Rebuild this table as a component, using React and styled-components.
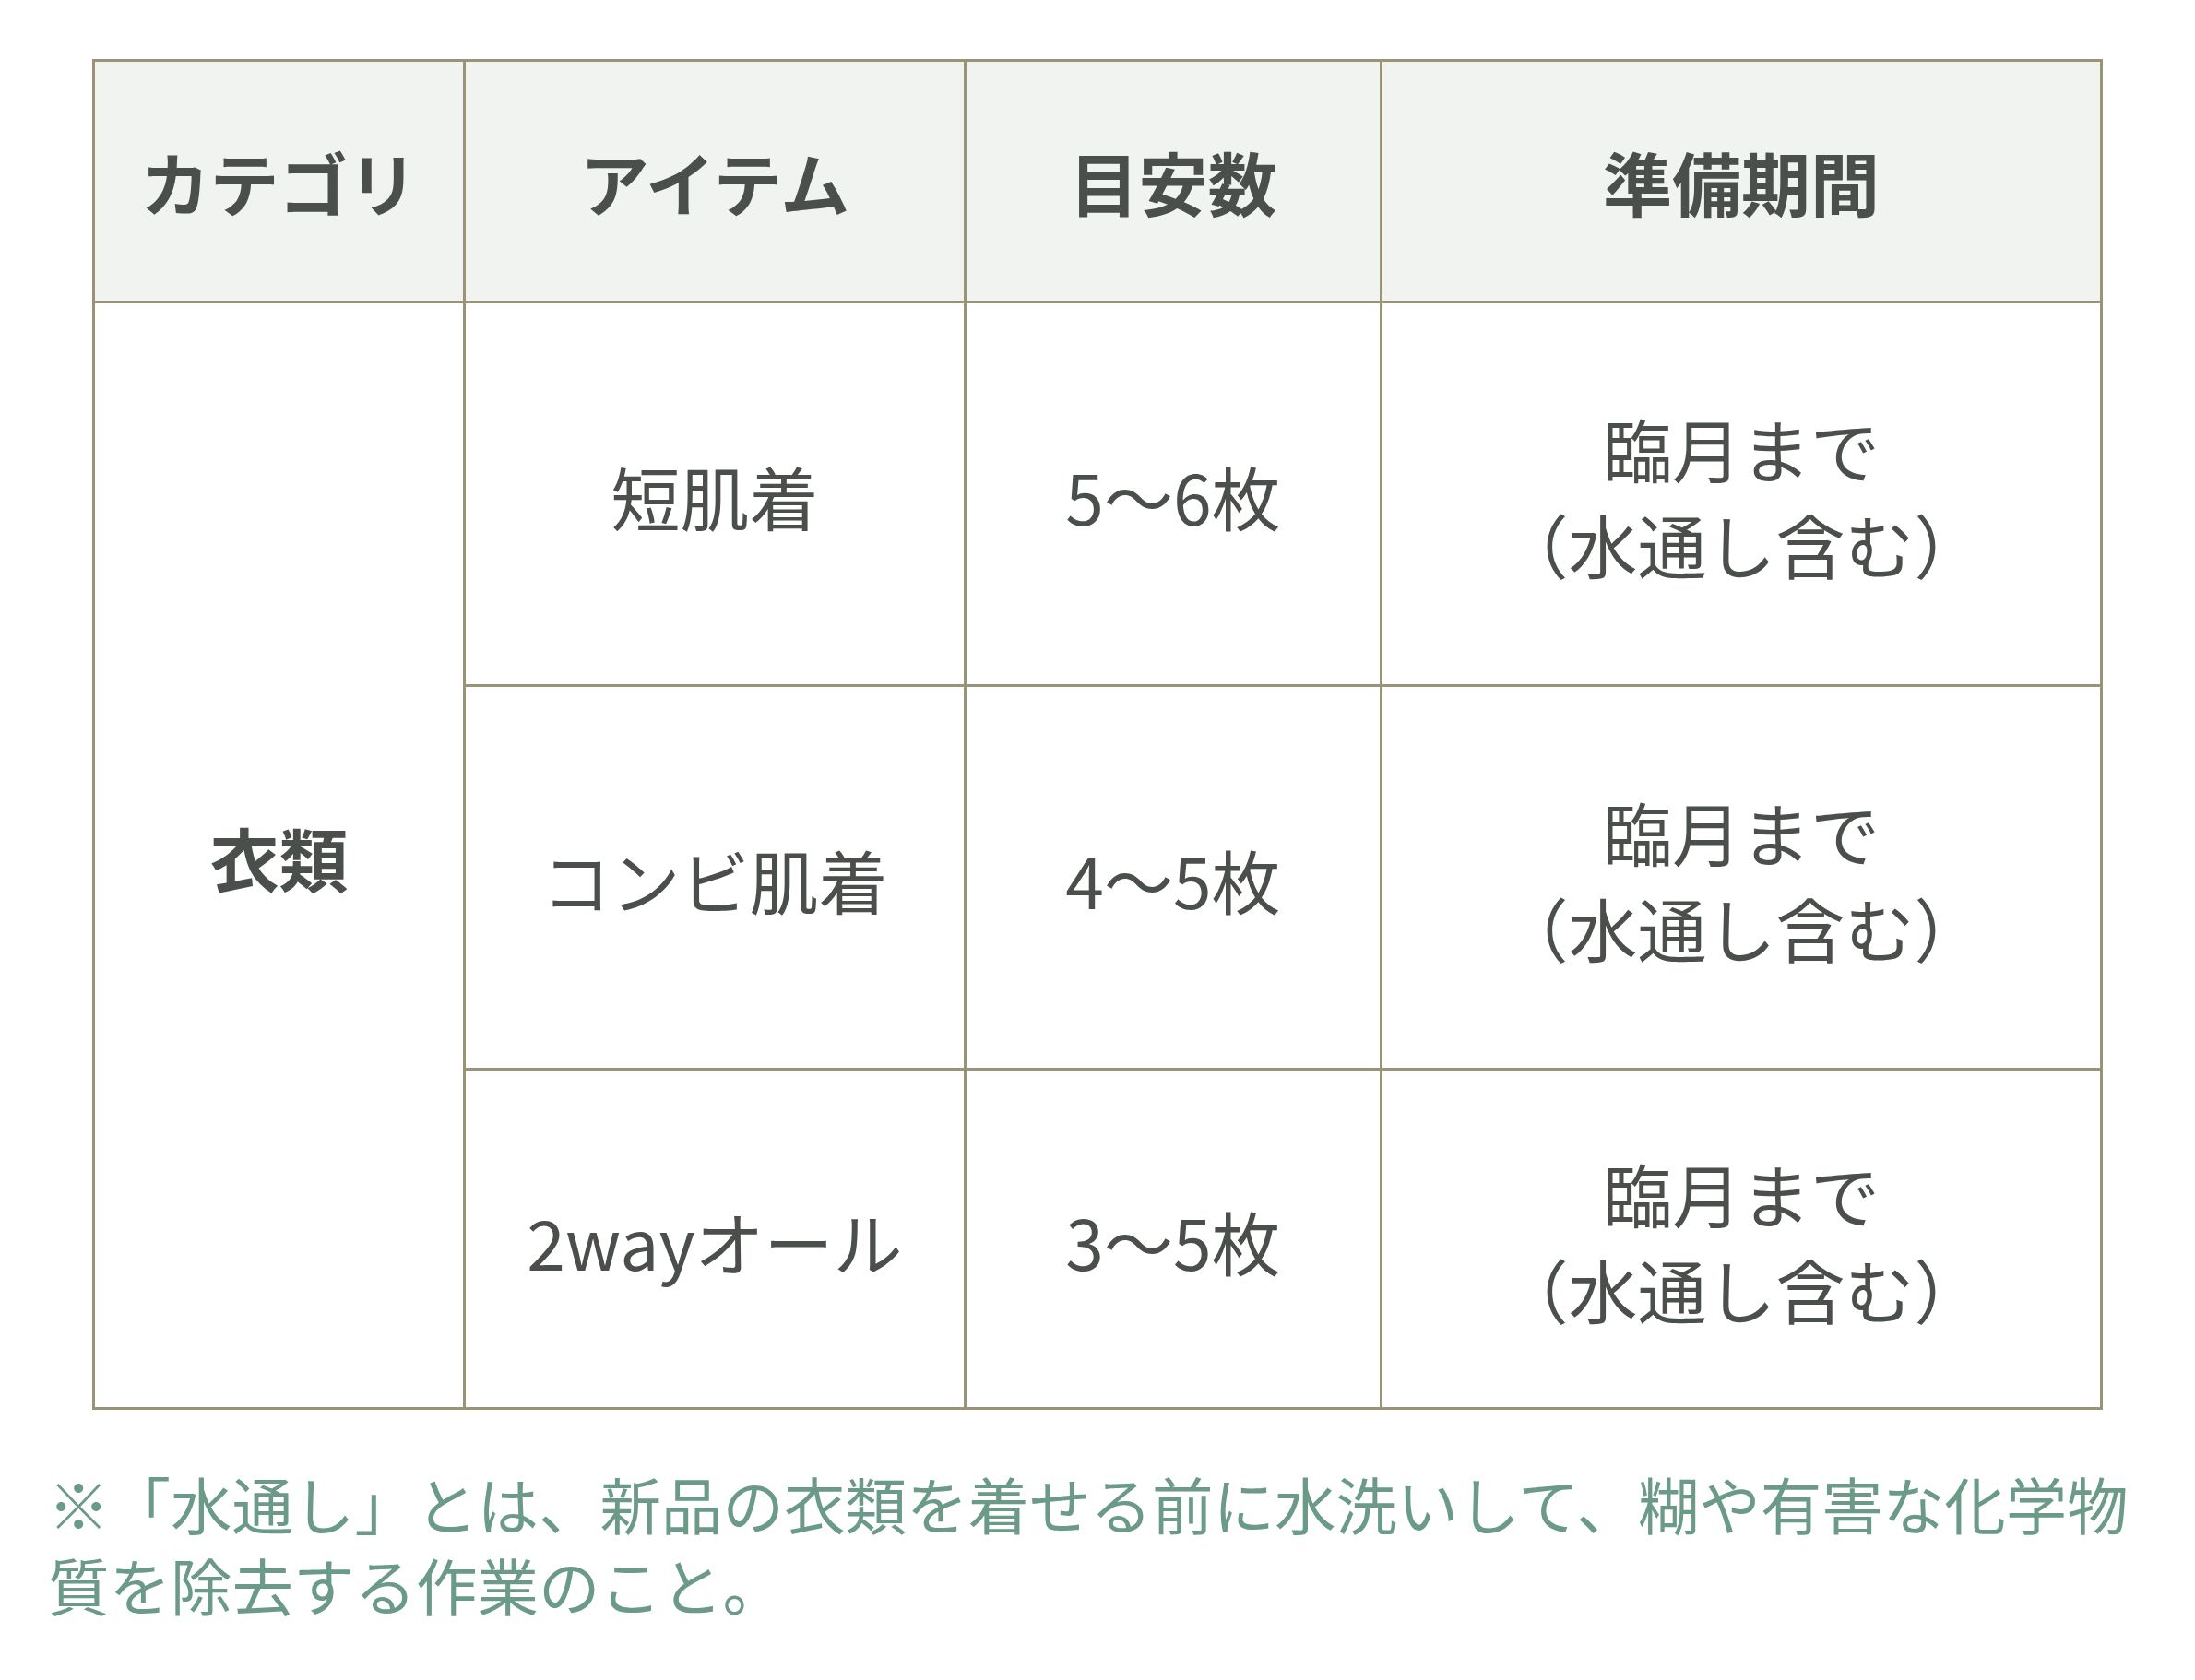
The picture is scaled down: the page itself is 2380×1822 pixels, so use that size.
import React from "react";
import styled, { createGlobalStyle } from "styled-components";

const GlobalStyle = createGlobalStyle`
  html, body {
    margin: 0;
    padding: 0;
    background: #ffffff;
  }
  body {
    font-family: "Noto Sans CJK JP", "Noto Sans", sans-serif;
    color: #4b4f4b;
  }
`;

const Page = styled.div`
  width: 2380px;
  min-height: 1822px;
  box-sizing: border-box;
  padding: 64px 0 0 0;
  background: #ffffff;
`;

const Table = styled.table`
  margin-left: 100px;
  width: 2177px;
  border-collapse: collapse;
  table-layout: fixed;
  border: 3px solid #9a9378;
`;

const Col = styled.col`
  width: ${(p) => p.$w}px;
`;

const HeadRow = styled.tr`
  height: 262px;
  background: #f1f3f0;
`;

const BodyRow = styled.tr`
  height: ${(p) => p.$h}px;
`;

const HeadCell = styled.th`
  border: 3px solid #9a9378;
  font-size: 75px;
  font-weight: 700;
  line-height: 104px;
  text-align: center;
  vertical-align: middle;
  padding: 0;
  color: #4b4f4b;
`;

const Cell = styled.td`
  border: 3px solid #9a9378;
  font-size: 75px;
  font-weight: ${(p) => (p.$bold ? 700 : 400)};
  line-height: 104px;
  text-align: center;
  vertical-align: middle;
  padding: 4px 0 0 0;
  color: #4b4f4b;
`;

const Line = styled.span`
  display: block;
  white-space: nowrap;
`;

const Note = styled.p`
  margin: 57px 0 0 52px;
  width: 2290px;
  font-size: 66.5px;
  line-height: 88px;
  color: #6b9a89;
  font-weight: 400;
`;

const rows = [
  { item: "短肌着", qty: "5〜6枚", h: 416 },
  { item: "コンビ肌着", qty: "4〜5枚", h: 416 },
  { item: "2wayオール", qty: "3〜5枚", h: 368 },
];

export default function App() {
  return (
    <>
      <GlobalStyle />
      <Page>
        <Table>
          <colgroup>
            <Col $w={402} />
            <Col $w={543} />
            <Col $w={451} />
            <Col $w={781} />
          </colgroup>
          <thead>
            <HeadRow>
              <HeadCell>カテゴリ</HeadCell>
              <HeadCell>アイテム</HeadCell>
              <HeadCell>目安数</HeadCell>
              <HeadCell>準備期間</HeadCell>
            </HeadRow>
          </thead>
          <tbody>
            {rows.map((r, i) => (
              <BodyRow key={r.item} $h={r.h}>
                {i === 0 && (
                  <Cell $bold rowSpan={3}>
                    衣類
                  </Cell>
                )}
                <Cell>{r.item}</Cell>
                <Cell>{r.qty}</Cell>
                <Cell>
                  <Line>臨月まで</Line>
                  <Line>（水通し含む）</Line>
                </Cell>
              </BodyRow>
            ))}
          </tbody>
        </Table>
        <Note>
          ※「水通し」とは、新品の衣類を着せる前に水洗いして、糊や有害な化学物質を除去する作業のこと。
        </Note>
      </Page>
    </>
  );
}
